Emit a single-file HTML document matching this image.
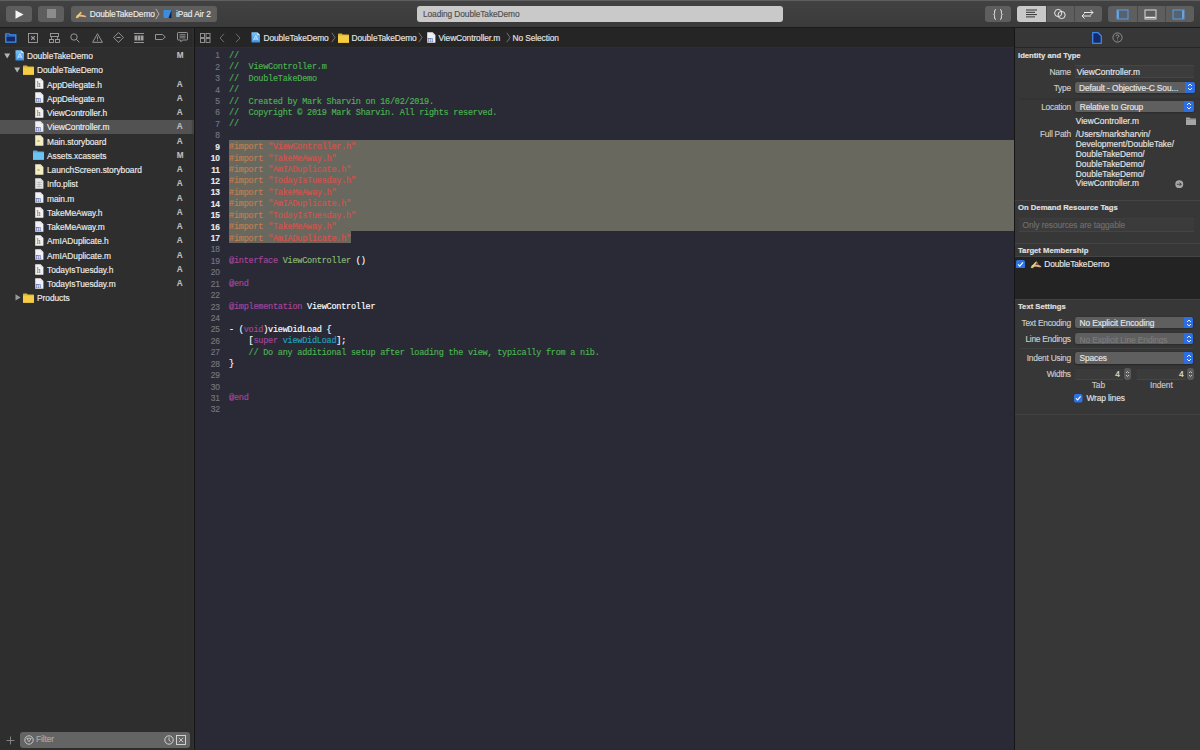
<!DOCTYPE html>
<html><head><meta charset="utf-8">
<style>
*{margin:0;padding:0;box-sizing:border-box}
html,body{width:1200px;height:750px;overflow:hidden;background:#2b2b2b;font-family:"Liberation Sans",sans-serif;font-size:8.4px;letter-spacing:-0.1px;color:#dcdcdc;-webkit-text-stroke-width:0.15px}
.a{position:absolute}
#tb{left:0;top:0;width:1200px;height:28px;background:linear-gradient(#424242,#3a3a3a);z-index:5}
.btn{position:absolute;top:6px;height:15.6px;background:#5e5e5e;border-radius:3px}
#nav{left:0;top:27px;width:194px;height:723px;background:#2e2e2e}
#navtabs{left:0;top:0;width:194px;height:21px;background:#2b2b2b;border-bottom:1px solid #323232}
#div1{left:194px;top:27px;width:1px;height:723px;background:#151515;box-shadow:-1.5px 0 1px #333,1.5px 0 1px #2d2e36}
#ed{left:195px;top:27px;width:819px;height:723px;background:#292a36}
#jb{left:0;top:0;width:819px;height:21px;background:#252525;border-bottom:1px solid #2f2f31}
#div2{left:1014px;top:27px;width:1px;height:723px;background:#161616}
#insp{left:1015px;top:27px;width:185px;height:723px;background:#373737}
.row{position:absolute;left:0;width:194px;height:14.26px;line-height:14.26px;white-space:nowrap;color:#ececec;letter-spacing:-0.05px}
.row .t{position:absolute;top:0.8px}
.row .s{position:absolute;left:176.8px;top:0.8px;color:#bdbdbd;font-weight:bold;font-size:8.2px;letter-spacing:0}
.code{position:absolute;left:0;top:0;font-family:"Liberation Mono",monospace;font-size:8.5px;letter-spacing:-0.225px;line-height:11.42px;white-space:pre}
.ln{position:absolute;width:25px;text-align:right;color:#76767e;left:0;font-family:'Liberation Sans',sans-serif!important;font-size:8.4px!important;letter-spacing:0!important}
.cl{position:absolute;left:34px;color:#fff}
.cm{color:#4cb550}.pp{color:#c27e52}.st{color:#d8524c}.kw{color:#a8469a}.pc{color:#8cbc76}.fn{color:#26a0bc}
</style></head><body>
<div id="tb" class="a">
  <div class="a" style="left:0;top:0;width:1200px;height:1px;background:#5f5f5f"></div>
  <div class="a" style="left:0;top:27px;width:1200px;height:1px;background:#1b1b1b"></div>
  <div class="btn" style="left:6px;width:26px"><svg class="a" style="left:9px;top:3.5px" width="9" height="9" viewBox="0 0 9 9"><path d="M0.5 0.3 L8.6 4.5 L0.5 8.7Z" fill="#f4f4f4"/></svg></div>
  <div class="btn" style="left:38px;width:26px"><div class="a" style="left:9.3px;top:3.3px;width:8.5px;height:8.5px;background:#8c8c8c"></div></div>
  <div class="btn" style="left:71px;width:146px">
    <svg class="a" style="left:4px;top:2.5px" width="13" height="11" viewBox="0 0 13 11"><path d="M6.5 1.5L10.5 8.5H8.8L6.5 4.2L4.5 8H3Z" fill="#8a5a3a"/><path d="M1.5 6.5L4.5 5.3L10.5 6.8L11.5 8.2L4.5 7.5L2.5 9.5Z" fill="#e8b890"/><path d="M1.2 8.8L6.2 3.2" stroke="#e8d070" stroke-width="1.6"/></svg>
    <div class="a" style="left:18.7px;top:0.5px;line-height:15.6px;color:#ececec">DoubleTakeDemo</div>
    <svg class="a" style="left:84px;top:2px" width="5" height="12" viewBox="0 0 5 12"><path d="M0.8 0.8 L4 6 L0.8 11.2" stroke="#bdbdbd" stroke-width="0.9" fill="none"/></svg>
    <svg class="a" style="left:92px;top:3px" width="10" height="10" viewBox="0 0 10 10"><rect x="0.5" y="1" width="8" height="8" rx="1" fill="#3b8de0"/><path d="M5.5 9 L8.5 9 L8.5 1 Z" fill="#0d1a3a"/></svg>
    <div class="a" style="left:105px;top:0.5px;line-height:15.6px;color:#ececec">iPad Air 2</div>
  </div>
  <div class="a" style="left:417px;top:6px;width:366px;height:15.6px;background:#c9c9c9;border-radius:3px;color:#4e4e4e;line-height:17.4px;padding-left:6px">Loading DoubleTakeDemo</div>
  <div class="btn" style="left:985px;width:26px"><svg class="a" style="left:8px;top:2.5px" width="10" height="11" viewBox="0 0 10 11"><path d="M3 0.6Q1.6 0.6 1.6 2V4.3Q1.6 5.5 0.6 5.5Q1.6 5.5 1.6 6.7V9Q1.6 10.4 3 10.4M7 0.6Q8.4 0.6 8.4 2V4.3Q8.4 5.5 9.4 5.5Q8.4 5.5 8.4 6.7V9Q8.4 10.4 7 10.4" stroke="#ececec" stroke-width="0.9" fill="none"/></svg></div>
  <div class="btn" style="left:1017px;width:85.3px;overflow:hidden">
    <div class="a" style="left:0;top:0;width:29px;height:15.6px;background:#c9c9c9"></div>
    <svg class="a" style="left:8px;top:3px" width="13" height="10" viewBox="0 0 13 10"><path d="M1 1H12M1 3.3H10M1 5.6H12M1 7.9H10" stroke="#333" stroke-width="1"/></svg>
    <div class="a" style="left:29px;top:0;width:0.6px;height:15.6px;background:#4a4a4a"></div>
    <svg class="a" style="left:36px;top:2px" width="14" height="12" viewBox="0 0 14 12"><circle cx="5.2" cy="5" r="3.6" stroke="#e8e8e8" stroke-width="1" fill="none"/><circle cx="8.6" cy="7" r="3.6" stroke="#e8e8e8" stroke-width="1" fill="none"/></svg>
    <div class="a" style="left:57.3px;top:0;width:0.6px;height:15.6px;background:#4a4a4a"></div>
    <svg class="a" style="left:63px;top:2px" width="15" height="12" viewBox="0 0 15 12"><path d="M4 4.5H13M10.5 2L13 4.5L10.5 7M2 8H11M4.5 5.5L2 8L4.5 10.5" stroke="#e8e8e8" stroke-width="1" fill="none"/></svg>
  </div>
  <div class="btn" style="left:1108.4px;width:85.3px;overflow:hidden">
    <div class="a" style="left:28.4px;top:0;width:0.6px;height:15.6px;background:#4a4a4a"></div>
    <div class="a" style="left:56.8px;top:0;width:0.6px;height:15.6px;background:#4a4a4a"></div>
    <svg class="a" style="left:8px;top:2.5px" width="13" height="11" viewBox="0 0 13 11"><rect x="1" y="1" width="11" height="9" stroke="#5aa4f0" stroke-width="0.9" fill="#4a6a90" fill-opacity="0.35"/><path d="M2 1.5V9.5" stroke="#6ab0f8" stroke-width="1.6"/></svg>
    <svg class="a" style="left:36px;top:2.5px" width="13" height="11" viewBox="0 0 13 11"><rect x="1" y="1" width="11" height="9" stroke="#e8e8e8" stroke-width="0.9" fill="none"/><path d="M1.5 8.3H11.5" stroke="#e8e8e8" stroke-width="1.2"/></svg>
    <svg class="a" style="left:64px;top:2.5px" width="13" height="11" viewBox="0 0 13 11"><rect x="1" y="1" width="11" height="9" stroke="#5aa4f0" stroke-width="0.9" fill="#4a6a90" fill-opacity="0.35"/><path d="M11 1.5V9.5" stroke="#6ab0f8" stroke-width="1.6"/></svg>
  </div>
</div>

<div id="nav" class="a">
  <div id="navtabs" class="a">
    <svg class="a" style="left:5px;top:5.8px" width="12" height="10" viewBox="0 0 12 10"><path d="M0.8 0.8H4.2L5 1.8H10.8V9.2H0.8Z" stroke="#3b8ff0" stroke-width="1.3" fill="#15296a"/><path d="M0.8 3H10.8" stroke="#3b8ff0" stroke-width="1"/></svg>
    <svg class="a" style="left:27.5px;top:5.8px" width="10" height="10" viewBox="0 0 10 10"><rect x="0.5" y="0.5" width="9" height="9" stroke="#a0a0a0" stroke-width="0.9" fill="none"/><path d="M3 3L7 7M7 3L3 7" stroke="#a0a0a0" stroke-width="0.9"/><circle cx="5" cy="5" r="1.2" stroke="#a0a0a0" stroke-width="0.8" fill="none"/></svg>
    <svg class="a" style="left:49px;top:5.8px" width="11" height="10" viewBox="0 0 11 10"><rect x="1.5" y="0.5" width="8" height="3" stroke="#a0a0a0" stroke-width="0.9" fill="none"/><rect x="0.5" y="6.5" width="4" height="3" stroke="#a0a0a0" stroke-width="0.9" fill="none"/><rect x="6.5" y="6.5" width="4" height="3" stroke="#a0a0a0" stroke-width="0.9" fill="none"/><path d="M2.5 3.5V6.5M8.5 3.5V6.5" stroke="#a0a0a0" stroke-width="0.9"/></svg>
    <svg class="a" style="left:70px;top:5.8px" width="10" height="10" viewBox="0 0 10 10"><circle cx="4" cy="4" r="3.2" stroke="#a0a0a0" stroke-width="0.9" fill="none"/><path d="M6.3 6.3L9.3 9.3" stroke="#a0a0a0" stroke-width="1"/></svg>
    <svg class="a" style="left:91.5px;top:5.6px" width="11" height="10" viewBox="0 0 11 10"><path d="M5.5 0.7L10.4 9.3H0.6Z" stroke="#a0a0a0" stroke-width="0.9" fill="none" stroke-linejoin="round"/><path d="M5.5 3.5V6.5M5.5 7.3V8.2" stroke="#a0a0a0" stroke-width="0.9"/></svg>
    <svg class="a" style="left:112.5px;top:5.3px" width="11" height="11" viewBox="0 0 11 11"><path d="M5.5 0.6L10.4 5.5L5.5 10.4L0.6 5.5Z" stroke="#a0a0a0" stroke-width="0.9" fill="none" stroke-linejoin="round"/><path d="M3.5 5.5H7.5" stroke="#a0a0a0" stroke-width="0.9"/></svg>
    <svg class="a" style="left:134px;top:5.8px" width="10" height="10" viewBox="0 0 10 10"><path d="M0 0.5H10M0 9.5H10" stroke="#a0a0a0" stroke-width="0.9"/><rect x="0.5" y="2.5" width="9" height="5" fill="#a0a0a0"/><path d="M3.5 2.5V7.5M6.5 2.5V7.5" stroke="#2d2d2d" stroke-width="0.6"/></svg>
    <svg class="a" style="left:155px;top:6.3px" width="11" height="8" viewBox="0 0 11 8"><path d="M0.5 1.5H7.5L10.3 4L7.5 6.5H0.5Z" stroke="#a0a0a0" stroke-width="0.9" fill="none" stroke-linejoin="round"/></svg>
    <svg class="a" style="left:176.5px;top:5.3px" width="11" height="11" viewBox="0 0 11 11"><path d="M1.2 0.5H9.8Q10.5 0.5 10.5 1.2V7.3Q10.5 8 9.8 8H5.5L4 9.8L3.5 8H1.2Q0.5 8 0.5 7.3V1.2Q0.5 0.5 1.2 0.5Z" stroke="#a0a0a0" stroke-width="0.9" fill="none"/><path d="M2.5 2.7H8.5M2.5 4.3H8.5M2.5 5.9H8.5" stroke="#a0a0a0" stroke-width="0.8"/></svg>
  </div>

<div class="row" style="top:21.20px;"><svg class="a" style="left:4px;top:4.5px" width="7" height="6" viewBox="0 0 7 6"><path d="M0.2 0.4H6.2L3.2 5.6Z" fill="#b4b4b4"/></svg><svg class="a" style="left:14.5px;top:1.6px" width="10" height="11" viewBox="0 0 10 11"><defs><linearGradient id="pg" x1="0" y1="0" x2="0" y2="1"><stop offset="0" stop-color="#7cc6fa"/><stop offset="1" stop-color="#3a8ee8"/></linearGradient></defs><path d="M0.5 0.2H6.2L9 3V10.6H0.5Z" fill="url(#pg)"/><path d="M6.2 0.2V3H9Z" fill="#cfe8fd"/><path d="M2.4 8.4L4.8 3.6L7.2 8.4M3.2 7H6.4" stroke="#e8f4ff" stroke-width="0.8" fill="none"/></svg><div class="t" style="left:27px">DoubleTakeDemo</div><div class="s">M</div></div>
<div class="row" style="top:35.46px;"><svg class="a" style="left:14px;top:4.5px" width="7" height="6" viewBox="0 0 7 6"><path d="M0.2 0.4H6.2L3.2 5.6Z" fill="#b4b4b4"/></svg><svg class="a" style="left:23.3px;top:2.1px" width="11" height="10" viewBox="0 0 11 10"><path d="M0 1.2Q0 0.5 0.7 0.5H3.8L4.8 1.6H10.3Q11 1.6 11 2.3V9.3Q11 9.8 10.4 9.8H0.6Q0 9.8 0 9.2Z" fill="#e0b030"/><path d="M0 2.6H11V9.2Q11 9.8 10.4 9.8H0.6Q0 9.8 0 9.2Z" fill="#f5cd45"/></svg><div class="t" style="left:37px">DoubleTakeDemo</div></div>
<div class="row" style="top:49.72px;"><svg class="a" style="left:35px;top:1.5px" width="9" height="11" viewBox="0 0 9 11"><path d="M0.2 0.2H5.6L8.4 3V10.8H0.2Z" fill="#f4f0f0"/><path d="M5.6 0.2V3H8.4" fill="#c9c9c9" opacity="0.5"/><text x="1.8" y="9.2" font-family="Liberation Serif" font-size="7.5" fill="#8a4848">h</text></svg><div class="t" style="left:47px">AppDelegate.h</div><div class="s">A</div></div>
<div class="row" style="top:63.98px;"><svg class="a" style="left:35px;top:1.5px" width="9" height="11" viewBox="0 0 9 11"><path d="M0.2 0.2H5.6L8.4 3V10.8H0.2Z" fill="#f0f0f6"/><path d="M5.6 0.2V3H8.4" fill="#c9c9c9" opacity="0.5"/><text x="0.6" y="9.6" font-family="Liberation Serif" font-size="7.2" fill="#505080">m</text></svg><div class="t" style="left:47px">AppDelegate.m</div><div class="s">A</div></div>
<div class="row" style="top:78.24px;"><svg class="a" style="left:35px;top:1.5px" width="9" height="11" viewBox="0 0 9 11"><path d="M0.2 0.2H5.6L8.4 3V10.8H0.2Z" fill="#f4f0f0"/><path d="M5.6 0.2V3H8.4" fill="#c9c9c9" opacity="0.5"/><text x="1.8" y="9.2" font-family="Liberation Serif" font-size="7.5" fill="#8a4848">h</text></svg><div class="t" style="left:47px">ViewController.h</div><div class="s">A</div></div>
<div class="row" style="top:92.50px;background:#525252;"><svg class="a" style="left:35px;top:1.5px" width="9" height="11" viewBox="0 0 9 11"><path d="M0.2 0.2H5.6L8.4 3V10.8H0.2Z" fill="#f0f0f6"/><path d="M5.6 0.2V3H8.4" fill="#c9c9c9" opacity="0.5"/><text x="0.6" y="9.6" font-family="Liberation Serif" font-size="7.2" fill="#505080">m</text></svg><div class="t" style="left:47px">ViewController.m</div><div class="s">A</div></div>
<div class="row" style="top:106.76px;"><svg class="a" style="left:35px;top:1.5px" width="9" height="11" viewBox="0 0 9 11"><path d="M0.2 0.2H5.6L8.4 3V10.8H0.2Z" fill="#f4eec4"/><path d="M5.6 0.2V3H8.4" fill="#c9c9c9" opacity="0.5"/><path d="M2.5 5L4.5 7M2.5 7L4.5 5" stroke="#b09040" stroke-width="0.7"/></svg><div class="t" style="left:47px">Main.storyboard</div><div class="s">A</div></div>
<div class="row" style="top:121.02px;"><svg class="a" style="left:33.3px;top:2.1px" width="11" height="10" viewBox="0 0 11 10"><path d="M0 1.2Q0 0.5 0.7 0.5H3.8L4.8 1.6H10.3Q11 1.6 11 2.3V9.3Q11 9.8 10.4 9.8H0.6Q0 9.8 0 9.2Z" fill="#52acdf"/><path d="M0 2.6H11V9.2Q11 9.8 10.4 9.8H0.6Q0 9.8 0 9.2Z" fill="#6cc4f2"/></svg><div class="t" style="left:47px">Assets.xcassets</div><div class="s">M</div></div>
<div class="row" style="top:135.28px;"><svg class="a" style="left:35px;top:1.5px" width="9" height="11" viewBox="0 0 9 11"><path d="M0.2 0.2H5.6L8.4 3V10.8H0.2Z" fill="#f4eec4"/><path d="M5.6 0.2V3H8.4" fill="#c9c9c9" opacity="0.5"/><path d="M2.5 5L4.5 7M2.5 7L4.5 5" stroke="#b09040" stroke-width="0.7"/></svg><div class="t" style="left:47px">LaunchScreen.storyboard</div><div class="s">A</div></div>
<div class="row" style="top:149.54px;"><svg class="a" style="left:35px;top:1.5px" width="9" height="11" viewBox="0 0 9 11"><path d="M0.2 0.2H5.6L8.4 3V10.8H0.2Z" fill="#e4e4e4"/><path d="M5.6 0.2V3H8.4" fill="#c9c9c9" opacity="0.5"/><path d="M1.5 4.5H6.8M1.5 6.5H6.8M1.5 8.5H6.8M4 3.5V9.5" stroke="#a0a0a0" stroke-width="0.5"/></svg><div class="t" style="left:47px">Info.plist</div><div class="s">A</div></div>
<div class="row" style="top:163.80px;"><svg class="a" style="left:35px;top:1.5px" width="9" height="11" viewBox="0 0 9 11"><path d="M0.2 0.2H5.6L8.4 3V10.8H0.2Z" fill="#f0f0f6"/><path d="M5.6 0.2V3H8.4" fill="#c9c9c9" opacity="0.5"/><text x="0.6" y="9.6" font-family="Liberation Serif" font-size="7.2" fill="#505080">m</text></svg><div class="t" style="left:47px">main.m</div><div class="s">A</div></div>
<div class="row" style="top:178.06px;"><svg class="a" style="left:35px;top:1.5px" width="9" height="11" viewBox="0 0 9 11"><path d="M0.2 0.2H5.6L8.4 3V10.8H0.2Z" fill="#f4f0f0"/><path d="M5.6 0.2V3H8.4" fill="#c9c9c9" opacity="0.5"/><text x="1.8" y="9.2" font-family="Liberation Serif" font-size="7.5" fill="#8a4848">h</text></svg><div class="t" style="left:47px">TakeMeAway.h</div><div class="s">A</div></div>
<div class="row" style="top:192.32px;"><svg class="a" style="left:35px;top:1.5px" width="9" height="11" viewBox="0 0 9 11"><path d="M0.2 0.2H5.6L8.4 3V10.8H0.2Z" fill="#f0f0f6"/><path d="M5.6 0.2V3H8.4" fill="#c9c9c9" opacity="0.5"/><text x="0.6" y="9.6" font-family="Liberation Serif" font-size="7.2" fill="#505080">m</text></svg><div class="t" style="left:47px">TakeMeAway.m</div><div class="s">A</div></div>
<div class="row" style="top:206.58px;"><svg class="a" style="left:35px;top:1.5px" width="9" height="11" viewBox="0 0 9 11"><path d="M0.2 0.2H5.6L8.4 3V10.8H0.2Z" fill="#f4f0f0"/><path d="M5.6 0.2V3H8.4" fill="#c9c9c9" opacity="0.5"/><text x="1.8" y="9.2" font-family="Liberation Serif" font-size="7.5" fill="#8a4848">h</text></svg><div class="t" style="left:47px">AmIADuplicate.h</div><div class="s">A</div></div>
<div class="row" style="top:220.84px;"><svg class="a" style="left:35px;top:1.5px" width="9" height="11" viewBox="0 0 9 11"><path d="M0.2 0.2H5.6L8.4 3V10.8H0.2Z" fill="#f0f0f6"/><path d="M5.6 0.2V3H8.4" fill="#c9c9c9" opacity="0.5"/><text x="0.6" y="9.6" font-family="Liberation Serif" font-size="7.2" fill="#505080">m</text></svg><div class="t" style="left:47px">AmIADuplicate.m</div><div class="s">A</div></div>
<div class="row" style="top:235.10px;"><svg class="a" style="left:35px;top:1.5px" width="9" height="11" viewBox="0 0 9 11"><path d="M0.2 0.2H5.6L8.4 3V10.8H0.2Z" fill="#f4f0f0"/><path d="M5.6 0.2V3H8.4" fill="#c9c9c9" opacity="0.5"/><text x="1.8" y="9.2" font-family="Liberation Serif" font-size="7.5" fill="#8a4848">h</text></svg><div class="t" style="left:47px">TodayIsTuesday.h</div><div class="s">A</div></div>
<div class="row" style="top:249.36px;"><svg class="a" style="left:35px;top:1.5px" width="9" height="11" viewBox="0 0 9 11"><path d="M0.2 0.2H5.6L8.4 3V10.8H0.2Z" fill="#f0f0f6"/><path d="M5.6 0.2V3H8.4" fill="#c9c9c9" opacity="0.5"/><text x="0.6" y="9.6" font-family="Liberation Serif" font-size="7.2" fill="#505080">m</text></svg><div class="t" style="left:47px">TodayIsTuesday.m</div><div class="s">A</div></div>
<div class="row" style="top:263.62px;"><svg class="a" style="left:15px;top:3.5px" width="6" height="7" viewBox="0 0 6 7"><path d="M0.5 0.3V6.5L5.6 3.4Z" fill="#9a9a9a"/></svg><svg class="a" style="left:23.3px;top:2.1px" width="11" height="10" viewBox="0 0 11 10"><path d="M0 1.2Q0 0.5 0.7 0.5H3.8L4.8 1.6H10.3Q11 1.6 11 2.3V9.3Q11 9.8 10.4 9.8H0.6Q0 9.8 0 9.2Z" fill="#e0b030"/><path d="M0 2.6H11V9.2Q11 9.8 10.4 9.8H0.6Q0 9.8 0 9.2Z" fill="#f5cd45"/></svg><div class="t" style="left:37px">Products</div></div>
  <svg class="a" style="left:6px;top:708.5px" width="9" height="9" viewBox="0 0 9 9"><path d="M4.5 0.5V8.5M0.5 4.5H8.5" stroke="#8a8a8a" stroke-width="0.9"/></svg>
  <div class="a" style="left:20px;top:705.3px;width:170px;height:15.7px;background:#646464;border-radius:3px">
    <svg class="a" style="left:3.5px;top:3px" width="10" height="10" viewBox="0 0 10 10"><circle cx="5" cy="5" r="4.2" stroke="#cfcfcf" stroke-width="0.9" fill="none"/><path d="M2.8 3.3H7.2L5 6.8Z" stroke="#cfcfcf" stroke-width="0.8" fill="none"/></svg>
    <div class="a" style="left:16px;top:0;line-height:15.5px;color:#a9a9a9">Filter</div>
    <svg class="a" style="left:144px;top:3px" width="10" height="10" viewBox="0 0 10 10"><circle cx="5" cy="5" r="4.2" stroke="#dcdcdc" stroke-width="0.9" fill="none"/><path d="M5 2.3V5.2L6.6 6.6" stroke="#dcdcdc" stroke-width="0.8" fill="none"/></svg>
    <svg class="a" style="left:156px;top:3px" width="10" height="10" viewBox="0 0 10 10"><rect x="0.5" y="0.5" width="9" height="9" stroke="#dcdcdc" stroke-width="0.9" fill="none"/><path d="M2.8 2.8L7.2 7.2M7.2 2.8L2.8 7.2" stroke="#dcdcdc" stroke-width="0.8"/></svg>
  </div>
</div>
<div id="div1" class="a"></div>
<div id="ed" class="a">
  <div id="jb" class="a">
    <svg class="a" style="left:5px;top:6px" width="11" height="10" viewBox="0 0 11 10"><rect x="0.5" y="0.5" width="4" height="4" stroke="#9a9a9a" stroke-width="0.9" fill="none"/><rect x="6" y="0.5" width="4" height="4" stroke="#9a9a9a" stroke-width="0.9" fill="none"/><rect x="0.5" y="5.5" width="4" height="4" stroke="#9a9a9a" stroke-width="0.9" fill="none"/><rect x="6" y="5.5" width="4" height="4" stroke="#9a9a9a" stroke-width="0.9" fill="none"/></svg>
    <svg class="a" style="left:23.5px;top:6px" width="6" height="10" viewBox="0 0 6 10"><path d="M5 0.8L1 5L5 9.2" stroke="#777" stroke-width="0.9" fill="none"/></svg>
    <svg class="a" style="left:40px;top:6px" width="6" height="10" viewBox="0 0 6 10"><path d="M1 0.8L5 5L1 9.2" stroke="#777" stroke-width="0.9" fill="none"/></svg>
    <svg class="a" style="left:55.8px;top:5.3px" width="10" height="11" viewBox="0 0 10 11"><defs><linearGradient id="pg2" x1="0" y1="0" x2="0" y2="1"><stop offset="0" stop-color="#7cc6fa"/><stop offset="1" stop-color="#3a8ee8"/></linearGradient></defs><path d="M0.5 0.2H6.2L9 3V10.6H0.5Z" fill="url(#pg2)"/><path d="M6.2 0.2V3H9Z" fill="#cfe8fd"/><path d="M2.4 8.4L4.8 3.6L7.2 8.4M3.2 7H6.4" stroke="#e8f4ff" stroke-width="0.8" fill="none"/></svg>
    <div class="a" style="left:68.5px;top:1px;line-height:20px;color:#e4e4e4">DoubleTakeDemo</div>
    <svg class="a" style="left:136px;top:5px" width="5" height="11" viewBox="0 0 5 11"><path d="M0.8 0.8L4 5.5L0.8 10.2" stroke="#8a8a8a" stroke-width="0.8" fill="none"/></svg>
    <svg class="a" style="left:142.5px;top:5.5px" width="11" height="10" viewBox="0 0 11 10"><path d="M0 1.2Q0 0.5 0.7 0.5H3.8L4.8 1.6H10.3Q11 1.6 11 2.3V9.3Q11 9.8 10.4 9.8H0.6Q0 9.8 0 9.2Z" fill="#e0b030"/><path d="M0 2.6H11V9.2Q11 9.8 10.4 9.8H0.6Q0 9.8 0 9.2Z" fill="#f5cd45"/></svg>
    <div class="a" style="left:156.5px;top:1px;line-height:20px;color:#e4e4e4">DoubleTakeDemo</div>
    <svg class="a" style="left:223px;top:5px" width="5" height="11" viewBox="0 0 5 11"><path d="M0.8 0.8L4 5.5L0.8 10.2" stroke="#8a8a8a" stroke-width="0.8" fill="none"/></svg>
    <svg class="a" style="left:232px;top:5.3px" width="9" height="11" viewBox="0 0 9 11"><path d="M0.2 0.2H5.6L8.4 3V10.8H0.2Z" fill="#f0f0f6"/><path d="M5.6 0.2V3H8.4" fill="#c9c9c9" opacity="0.5"/><text x="0.6" y="9.6" font-family="Liberation Serif" font-size="7.2" fill="#505080">m</text></svg>
    <div class="a" style="left:243.5px;top:1px;line-height:20px;color:#e4e4e4">ViewController.m</div>
    <svg class="a" style="left:311px;top:5px" width="5" height="11" viewBox="0 0 5 11"><path d="M0.8 0.8L4 5.5L0.8 10.2" stroke="#8a8a8a" stroke-width="0.8" fill="none"/></svg>
    <div class="a" style="left:317.5px;top:1px;line-height:20px;color:#e4e4e4">No Selection</div>
  </div>
  <div class="a" style="left:34px;top:113.0px;width:785px;height:91.4px;background:#69685f"></div>
  <div class="a" style="left:34px;top:204.3px;width:121.7px;height:11.5px;background:#69685f"></div>
<div class="ln code" style="top:23.35px;">1</div><div class="cl code" style="top:23.85px"><span class="cm">//</span></div>
<div class="ln code" style="top:34.77px;">2</div><div class="cl code" style="top:35.27px"><span class="cm">//  ViewController.m</span></div>
<div class="ln code" style="top:46.19px;">3</div><div class="cl code" style="top:46.69px"><span class="cm">//  DoubleTakeDemo</span></div>
<div class="ln code" style="top:57.61px;">4</div><div class="cl code" style="top:58.11px"><span class="cm">//</span></div>
<div class="ln code" style="top:69.03px;">5</div><div class="cl code" style="top:69.53px"><span class="cm">//  Created by Mark Sharvin on 16/02/2019.</span></div>
<div class="ln code" style="top:80.45px;">6</div><div class="cl code" style="top:80.95px"><span class="cm">//  Copyright © 2019 Mark Sharvin. All rights reserved.</span></div>
<div class="ln code" style="top:91.87px;">7</div><div class="cl code" style="top:92.37px"><span class="cm">//</span></div>
<div class="ln code" style="top:103.29px;">8</div><div class="cl code" style="top:103.79px"></div>
<div class="ln code" style="top:114.71px;color:#e8e8e8;font-weight:bold;">9</div><div class="cl code" style="top:115.21px"><span class="pp">#import </span><span class="st">"ViewController.h"</span></div>
<div class="ln code" style="top:126.13px;color:#e8e8e8;font-weight:bold;">10</div><div class="cl code" style="top:126.63px"><span class="pp">#import </span><span class="st">"TakeMeAway.h"</span></div>
<div class="ln code" style="top:137.55px;color:#e8e8e8;font-weight:bold;">11</div><div class="cl code" style="top:138.05px"><span class="pp">#import </span><span class="st">"AmIADuplicate.h"</span></div>
<div class="ln code" style="top:148.97px;color:#e8e8e8;font-weight:bold;">12</div><div class="cl code" style="top:149.47px"><span class="pp">#import </span><span class="st">"TodayIsTuesday.h"</span></div>
<div class="ln code" style="top:160.39px;color:#e8e8e8;font-weight:bold;">13</div><div class="cl code" style="top:160.89px"><span class="pp">#import </span><span class="st">"TakeMeAway.h"</span></div>
<div class="ln code" style="top:171.81px;color:#e8e8e8;font-weight:bold;">14</div><div class="cl code" style="top:172.31px"><span class="pp">#import </span><span class="st">"AmIADuplicate.h"</span></div>
<div class="ln code" style="top:183.23px;color:#e8e8e8;font-weight:bold;">15</div><div class="cl code" style="top:183.73px"><span class="pp">#import </span><span class="st">"TodayIsTuesday.h"</span></div>
<div class="ln code" style="top:194.65px;color:#e8e8e8;font-weight:bold;">16</div><div class="cl code" style="top:195.15px"><span class="pp">#import </span><span class="st">"TakeMeAway.h"</span></div>
<div class="ln code" style="top:206.07px;color:#e8e8e8;font-weight:bold;">17</div><div class="cl code" style="top:206.57px"><span class="pp">#import </span><span class="st">"AmIADuplicate.h"</span></div>
<div class="ln code" style="top:217.49px;">18</div><div class="cl code" style="top:217.99px"></div>
<div class="ln code" style="top:228.91px;">19</div><div class="cl code" style="top:229.41px"><span class="kw">@interface</span> <span class="pc">ViewController</span> ()</div>
<div class="ln code" style="top:240.33px;">20</div><div class="cl code" style="top:240.83px"></div>
<div class="ln code" style="top:251.75px;">21</div><div class="cl code" style="top:252.25px"><span class="kw">@end</span></div>
<div class="ln code" style="top:263.17px;">22</div><div class="cl code" style="top:263.67px"></div>
<div class="ln code" style="top:274.59px;">23</div><div class="cl code" style="top:275.09px"><span class="kw">@implementation</span> ViewController</div>
<div class="ln code" style="top:286.01px;">24</div><div class="cl code" style="top:286.51px"></div>
<div class="ln code" style="top:297.43px;">25</div><div class="cl code" style="top:297.93px">- (<span class="kw">void</span>)viewDidLoad {</div>
<div class="ln code" style="top:308.85px;">26</div><div class="cl code" style="top:309.35px">    [<span class="kw">super</span> <span class="fn">viewDidLoad</span>];</div>
<div class="ln code" style="top:320.27px;">27</div><div class="cl code" style="top:320.77px">    <span class="cm">// Do any additional setup after loading the view, typically from a nib.</span></div>
<div class="ln code" style="top:331.69px;">28</div><div class="cl code" style="top:332.19px">}</div>
<div class="ln code" style="top:343.11px;">29</div><div class="cl code" style="top:343.61px"></div>
<div class="ln code" style="top:354.53px;">30</div><div class="cl code" style="top:355.03px"></div>
<div class="ln code" style="top:365.95px;">31</div><div class="cl code" style="top:366.45px"><span class="kw">@end</span></div>
<div class="ln code" style="top:377.37px;">32</div><div class="cl code" style="top:377.87px"></div>
</div>
<div id="div2" class="a"></div>
<div id="insp" class="a">
<svg class="a" style="left:76.5px;top:4.6px" width="10" height="12" viewBox="0 0 10 12"><path d="M0.7 0.7H6L9.3 4V11.3H0.7Z" stroke="#3a88ee" stroke-width="1.3" fill="#142a6a" stroke-linejoin="round"/></svg>
<svg class="a" style="left:97.0px;top:5.3px" width="11" height="11" viewBox="0 0 11 11"><circle cx="5.5" cy="5.5" r="4.6" stroke="#9a9a9a" stroke-width="0.9" fill="none"/><path d="M4 4.3Q4 2.9 5.5 2.9Q7 2.9 7 4.2Q7 5 5.5 5.6V6.6M5.5 7.6V8.4" stroke="#9a9a9a" stroke-width="0.9" fill="none"/></svg>
<div class="a" style="left:0.0px;top:20.0px;width:185.0px;height:1.0px;background:#262626"></div>
<div class="a" style="left:3.0px;top:23.5px;line-height:10px;color:#e0e0e0;font-weight:bold;font-size:7.7px;letter-spacing:0;white-space:nowrap;">Identity and Type</div>
<div class="a" style="right:129.2px;top:39.7px;line-height:10px;color:#cdcdcd;white-space:nowrap;letter-spacing:-0.25px;">Name</div>
<div class="a" style="left:59.5px;top:38.0px;width:119.3px;height:13.0px;background:#3c3c3c;border-top:1px solid #454545;border-bottom:1px solid #454545"></div>
<div class="a" style="left:61.8px;top:39.7px;line-height:10px;color:#e6e6e6;white-space:nowrap;letter-spacing:0;">ViewController.m</div>
<div class="a" style="left:59.5px;top:54.5px;width:120.1px;height:11.6px;background:#5f5f5f;border-radius:2.5px;overflow:hidden;box-shadow:0 0.5px 2px rgba(0,0,0,0.35)"><div class="a" style="left:4.5px;top:1.3px;line-height:11.6px;color:#e6e6e6;white-space:nowrap">Default - Objective-C Sou...</div><div class="a" style="right:0;top:0;width:9.5px;height:11.6px;background:#2d6fe3"><svg class="a" style="left:2px;top:1.8px" width="6" height="8" viewBox="0 0 6 8"><path d="M1 3L3 1L5 3M1 5L3 7L5 5" stroke="#fff" stroke-width="0.9" fill="none"/></svg></div></div>
<div class="a" style="right:129.2px;top:55.7px;line-height:10px;color:#cdcdcd;white-space:nowrap;letter-spacing:-0.25px;">Type</div>
<div class="a" style="left:5.0px;top:71.0px;width:180.0px;height:2.0px;background:#333"></div>
<div class="a" style="right:129.2px;top:75.0px;line-height:10px;color:#cdcdcd;white-space:nowrap;letter-spacing:-0.25px;">Location</div>
<div class="a" style="left:60.2px;top:74.2px;width:118.6px;height:10.5px;background:#5f5f5f;border-radius:2.5px;overflow:hidden;box-shadow:0 0.5px 2px rgba(0,0,0,0.35)"><div class="a" style="left:4.5px;top:1.3px;line-height:10.5px;color:#e6e6e6;white-space:nowrap">Relative to Group</div><div class="a" style="right:0;top:0;width:9.5px;height:10.5px;background:#2d6fe3"><svg class="a" style="left:2px;top:1.2px" width="6" height="8" viewBox="0 0 6 8"><path d="M1 3L3 1L5 3M1 5L3 7L5 5" stroke="#fff" stroke-width="0.9" fill="none"/></svg></div></div>
<div class="a" style="left:60.8px;top:89.0px;line-height:10px;color:#e6e6e6;white-space:nowrap;letter-spacing:0;">ViewController.m</div>
<svg class="a" style="left:170.5px;top:89.5px" width="10" height="8" viewBox="0 0 10 8"><path d="M0 0.5H3.5L4.5 1.5H10V8H0Z" fill="#a6a6a6"/><path d="M0 2.5H10" stroke="#7a7a7a" stroke-width="0.5"/></svg>
<div class="a" style="right:129.2px;top:101.7px;line-height:10px;color:#cdcdcd;white-space:nowrap;letter-spacing:-0.25px;">Full Path</div>
<div class="a" style="left:60.8px;top:101.7px;line-height:10px;color:#e4e4e4;white-space:nowrap;letter-spacing:0;">/Users/marksharvin/</div>
<div class="a" style="left:60.8px;top:111.6px;line-height:10px;color:#e4e4e4;white-space:nowrap;letter-spacing:0;">Development/DoubleTake/</div>
<div class="a" style="left:60.8px;top:121.6px;line-height:10px;color:#e4e4e4;white-space:nowrap;letter-spacing:0;">DoubleTakeDemo/</div>
<div class="a" style="left:60.8px;top:131.5px;line-height:10px;color:#e4e4e4;white-space:nowrap;letter-spacing:0;">DoubleTakeDemo/</div>
<div class="a" style="left:60.8px;top:141.5px;line-height:10px;color:#e4e4e4;white-space:nowrap;letter-spacing:0;">DoubleTakeDemo/</div>
<div class="a" style="left:60.8px;top:151.4px;line-height:10px;color:#e4e4e4;white-space:nowrap;letter-spacing:0;">ViewController.m</div>
<svg class="a" style="left:160.3px;top:152.8px" width="8.5" height="8.5" viewBox="0 0 9 9"><circle cx="4.5" cy="4.5" r="4.2" fill="#a8a8a8"/><path d="M2 4.5H6.5M4.8 2.6L6.7 4.5L4.8 6.4" stroke="#333" stroke-width="0.9" fill="none"/></svg>
<div class="a" style="left:0.0px;top:173.0px;width:185.0px;height:1.0px;background:#444"></div>
<div class="a" style="left:3.0px;top:176.2px;line-height:10px;color:#e0e0e0;font-weight:bold;font-size:7.7px;letter-spacing:0;white-space:nowrap;">On Demand Resource Tags</div>
<div class="a" style="left:4.4px;top:190.9px;width:174.6px;height:13.9px;background:#3b3b3b;border-bottom:1px solid #444;border-top:1px solid #3e3e3e"></div>
<div class="a" style="left:7.5px;top:192.9px;line-height:10px;color:#6e6e6e;white-space:nowrap;">Only resources are taggable</div>
<div class="a" style="left:0.0px;top:216.0px;width:185.0px;height:1.0px;background:#444"></div>
<div class="a" style="left:3.0px;top:218.8px;line-height:10px;color:#e0e0e0;font-weight:bold;font-size:7.7px;letter-spacing:0;white-space:nowrap;">Target Membership</div>
<div class="a" style="left:0.0px;top:230.0px;width:185.0px;height:42.0px;background:#232323"></div>
<div class="a" style="left:0.0px;top:229.0px;width:185.0px;height:1.0px;background:#444"></div>
<svg class="a" style="left:1.2px;top:232.6px" width="9" height="8.5" viewBox="0 0 9 8.5"><rect x="0" y="0" width="9" height="8.5" rx="1.8" fill="#2e72e6"/><path d="M2 4.3L3.8 6.1L7 2.3" stroke="#fff" stroke-width="1.1" fill="none"/></svg>
<svg class="a" style="left:15.0px;top:231.5px" width="13" height="11" viewBox="0 0 13 11"><path d="M6.5 1.5L10.5 8.5H8.8L6.5 4.2L4.5 8H3Z" fill="#8a5a3a"/><path d="M1.5 6.5L4.5 5.3L10.5 6.8L11.5 8.2L4.5 7.5L2.5 9.5Z" fill="#e8b890"/><path d="M1.2 8.8L6.2 3.2" stroke="#e8d070" stroke-width="1.6"/></svg>
<div class="a" style="left:29.2px;top:231.9px;line-height:10px;color:#e6e6e6;white-space:nowrap;">DoubleTakeDemo</div>
<div class="a" style="left:0.0px;top:272.0px;width:185.0px;height:1.0px;background:#424242"></div>
<div class="a" style="left:3.0px;top:275.0px;line-height:10px;color:#e0e0e0;font-weight:bold;font-size:7.7px;letter-spacing:0;white-space:nowrap;">Text Settings</div>
<div class="a" style="right:129.2px;top:290.7px;line-height:10px;color:#cdcdcd;white-space:nowrap;letter-spacing:-0.25px;">Text Encoding</div>
<div class="a" style="left:60.0px;top:289.9px;width:118.4px;height:11.6px;background:#5f5f5f;border-radius:2.5px;overflow:hidden;box-shadow:0 0.5px 2px rgba(0,0,0,0.35)"><div class="a" style="left:4.5px;top:1.3px;line-height:11.6px;color:#e6e6e6;white-space:nowrap">No Explicit Encoding</div><div class="a" style="right:0;top:0;width:9.5px;height:11.6px;background:#2d6fe3"><svg class="a" style="left:2px;top:1.8px" width="6" height="8" viewBox="0 0 6 8"><path d="M1 3L3 1L5 3M1 5L3 7L5 5" stroke="#fff" stroke-width="0.9" fill="none"/></svg></div></div>
<div class="a" style="right:129.2px;top:306.7px;line-height:10px;color:#cdcdcd;white-space:nowrap;letter-spacing:-0.25px;">Line Endings</div>
<div class="a" style="left:60.0px;top:306.3px;width:118.4px;height:10.7px;background:#5f5f5f;border-radius:2.5px;overflow:hidden;box-shadow:0 0.5px 2px rgba(0,0,0,0.35)"><div class="a" style="left:4.5px;top:1.3px;line-height:10.7px;color:#7c7c7c;white-space:nowrap">No Explicit Line Endings</div><div class="a" style="right:0;top:0;width:9.5px;height:10.7px;background:#2d6fe3"><svg class="a" style="left:2px;top:1.3px" width="6" height="8" viewBox="0 0 6 8"><path d="M1 3L3 1L5 3M1 5L3 7L5 5" stroke="#fff" stroke-width="0.9" fill="none"/></svg></div></div>
<div class="a" style="left:5.0px;top:321.0px;width:173.4px;height:1.0px;background:#404040"></div>
<div class="a" style="right:129.2px;top:325.9px;line-height:10px;color:#cdcdcd;white-space:nowrap;letter-spacing:-0.25px;">Indent Using</div>
<div class="a" style="left:60.0px;top:325.0px;width:118.4px;height:11.7px;background:#5f5f5f;border-radius:2.5px;overflow:hidden;box-shadow:0 0.5px 2px rgba(0,0,0,0.35)"><div class="a" style="left:4.5px;top:1.3px;line-height:11.7px;color:#e6e6e6;white-space:nowrap">Spaces</div><div class="a" style="right:0;top:0;width:9.5px;height:11.7px;background:#2d6fe3"><svg class="a" style="left:2px;top:1.8px" width="6" height="8" viewBox="0 0 6 8"><path d="M1 3L3 1L5 3M1 5L3 7L5 5" stroke="#fff" stroke-width="0.9" fill="none"/></svg></div></div>
<div class="a" style="right:129.2px;top:341.9px;line-height:10px;color:#cdcdcd;white-space:nowrap;letter-spacing:-0.25px;">Widths</div>
<div class="a" style="left:60.0px;top:340.5px;width:48.0px;height:12.5px;background:#3b3b3b;border-top:1px solid #343434;border-bottom:1px solid #454545"></div>
<div class="a" style="right:80.2px;top:341.9px;line-height:10px;color:#e0e0e0;white-space:nowrap;">4</div>
<div class="a" style="left:109.0px;top:341.0px;width:6.5px;height:12px;background:#5a5a5a;border-radius:3px"><svg class="a" style="left:0.8px;top:2px" width="5" height="8" viewBox="0 0 5 8"><path d="M1 3L2.5 1.5L4 3M1 5L2.5 6.5L4 5" stroke="#d0d0d0" stroke-width="0.9" fill="none"/></svg></div>
<div class="a" style="left:122.0px;top:340.5px;width:49.4px;height:12.5px;background:#3b3b3b;border-top:1px solid #343434;border-bottom:1px solid #454545"></div>
<div class="a" style="right:16.5px;top:341.9px;line-height:10px;color:#e0e0e0;white-space:nowrap;">4</div>
<div class="a" style="left:172.0px;top:341.0px;width:6.5px;height:12px;background:#5a5a5a;border-radius:3px"><svg class="a" style="left:0.8px;top:2px" width="5" height="8" viewBox="0 0 5 8"><path d="M1 3L2.5 1.5L4 3M1 5L2.5 6.5L4 5" stroke="#d0d0d0" stroke-width="0.9" fill="none"/></svg></div>
<div class="a" style="left:83.4px;top:353.2px;line-height:10px;color:#c8c8c8;white-space:nowrap;transform:translateX(-50%)">Tab</div>
<div class="a" style="left:146.3px;top:353.2px;line-height:10px;color:#c8c8c8;white-space:nowrap;transform:translateX(-50%)">Indent</div>
<svg class="a" style="left:59.3px;top:367.0px" width="8.5" height="8.5" viewBox="0 0 9 9"><rect x="0" y="0" width="9" height="9" rx="1.8" fill="#2e72e6"/><path d="M2 4.5L3.8 6.3L7 2.5" stroke="#fff" stroke-width="1.1" fill="none"/></svg>
<div class="a" style="left:71.4px;top:366.2px;line-height:10px;color:#e0e0e0;white-space:nowrap;">Wrap lines</div>
<div class="a" style="left:0.0px;top:386.5px;width:185.0px;height:1.0px;background:#424242"></div>
</div>
</body></html>
